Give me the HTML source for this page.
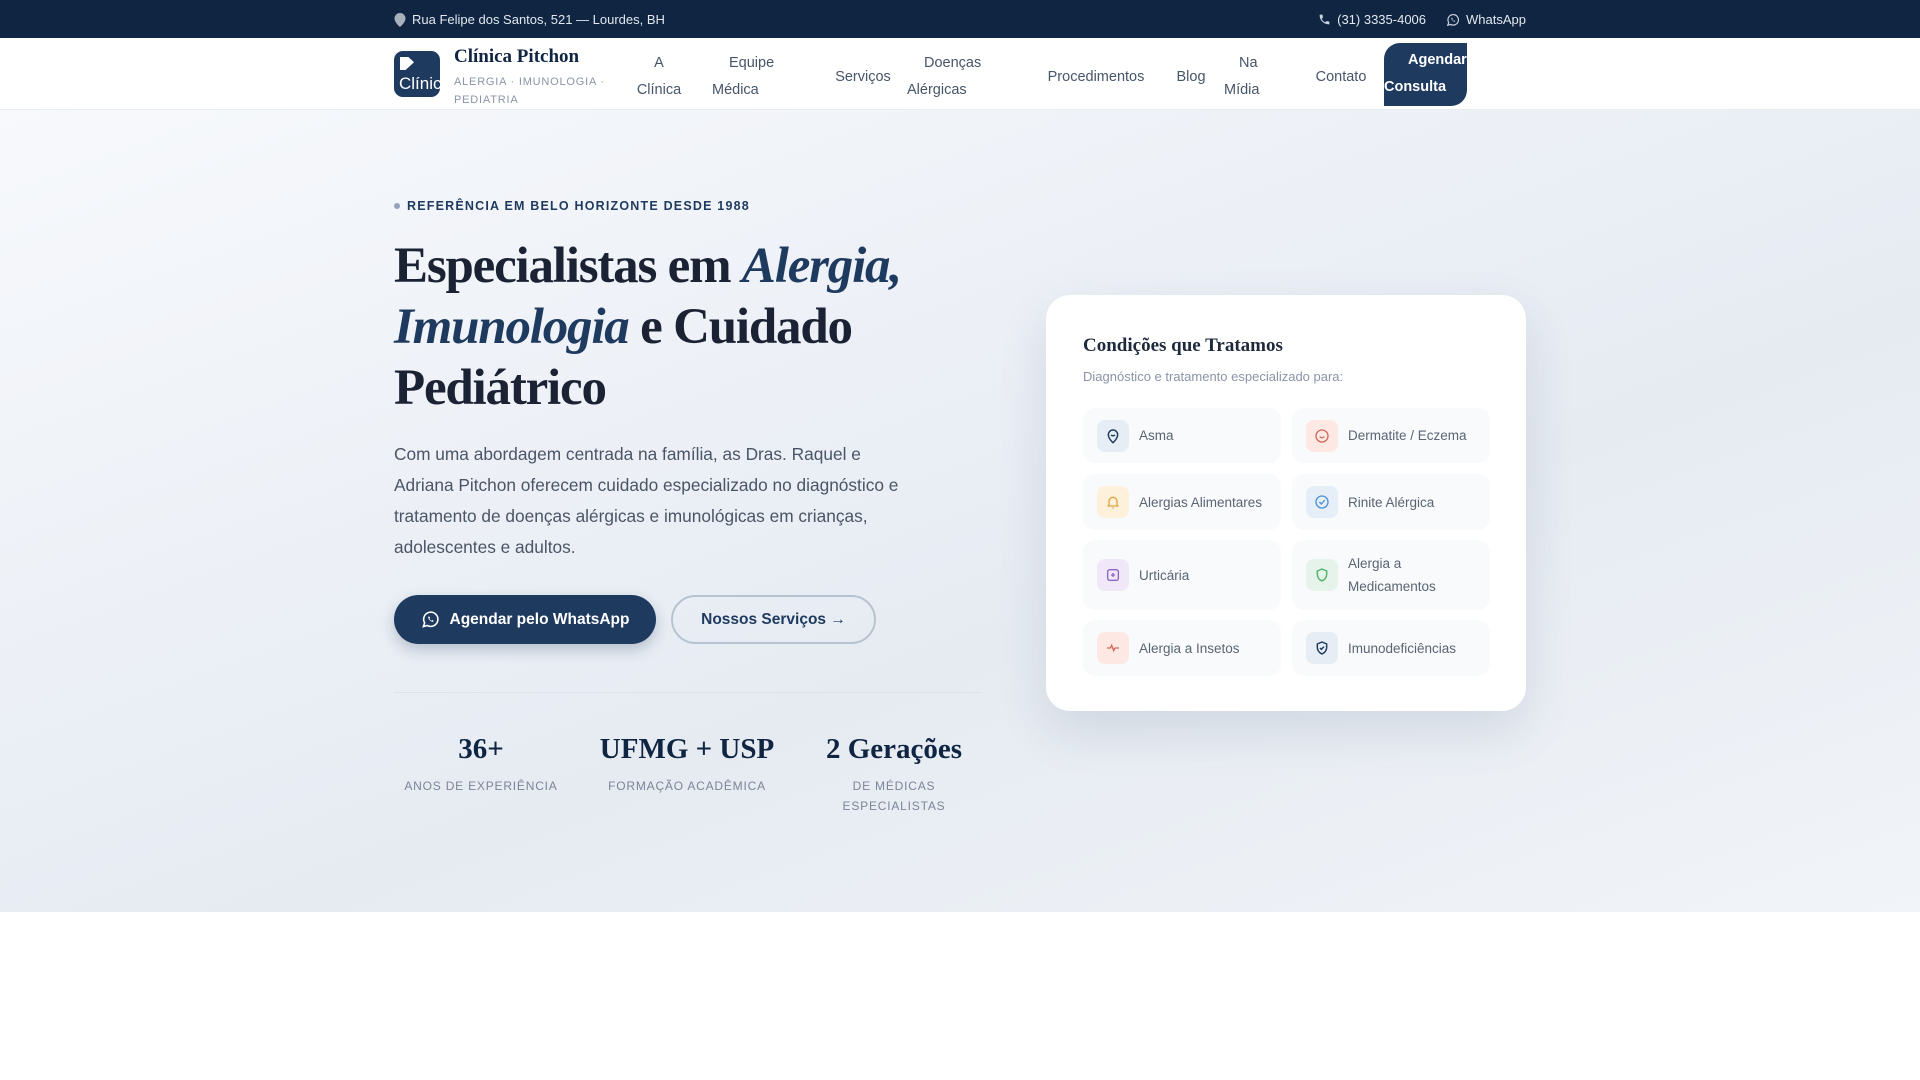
<!DOCTYPE html>
<html><head><meta charset="utf-8">
<style>
*{box-sizing:border-box;margin:0;padding:0}
body{width:1920px;height:1080px;overflow:hidden;background:#fff;font-family:"Liberation Sans",sans-serif;color:#1e293b}
.top{height:38px;background:#0f2542;color:#e2e8f0;font-size:13px;position:relative}
.top .l{position:absolute;left:394px;top:12px;display:flex;align-items:center;gap:6px}
.top .r{position:absolute;right:394px;top:12px;display:flex;align-items:center;gap:20px}
.top .r span{display:flex;align-items:center;gap:6px}
.nav{height:72px;background:#fff;border-bottom:1px solid #e8ecf1;position:relative}
.logo{position:absolute;left:394px;top:13px;width:46px;height:46px;border-radius:9px;background:#1e3a5f;overflow:hidden;color:#fff;font-size:17px}
.logo i{position:absolute;left:6px;top:6px;width:14px;height:13px;background:#fff;clip-path:polygon(0 0,60% 0,100% 40%,40% 100%,0 100%)}
.logo b{position:absolute;left:5px;top:23px;font-weight:normal;white-space:nowrap}
.brand{position:absolute;left:454px;top:8px}
.brand h1{font-family:"Liberation Serif",serif;font-size:19px;font-weight:bold;color:#0f2542}
.brand p{font-size:11px;letter-spacing:0.8px;color:#8a94a6;line-height:18px;margin-top:5px;width:165px}
.ni{position:absolute;font-size:14.5px;color:#475569;line-height:27px;text-align:center}
.cta{position:absolute;left:1384px;top:43px;width:83px;height:63px;background:#1e3a5f;color:#fff;font-weight:bold;font-size:14.5px;line-height:27px;padding-top:4px}
.hero{position:absolute;top:110px;left:0;width:1920px;height:802px;background:linear-gradient(160deg,#f7f9fc 0%,#eaeef5 45%,#e6ebf2 60%,#f1f4f8 100%)}
.eb{position:absolute;left:394px;top:199px;font-size:12.5px;font-weight:bold;letter-spacing:1.2px;color:#1e3a5f;display:flex;align-items:center;gap:7px}
.eb i{width:6px;height:6px;border-radius:50%;background:#94a3b8}
.h{position:absolute;left:394px;top:236px;font-family:"Liberation Serif",serif;font-weight:bold;font-size:51px;line-height:61px;color:#1a2233;letter-spacing:-1.2px;width:560px}
.h em{color:#1e3a5f}
.p{position:absolute;left:394px;top:439px;width:520px;font-size:17.3px;line-height:31px;color:#4b5565}
.b1{position:absolute;left:394px;top:595px;width:262px;height:49px;border-radius:25px;background:#1e3a5f;color:#fff;font-weight:bold;font-size:15.5px;display:flex;align-items:center;justify-content:center;gap:10px;box-shadow:0 6px 14px rgba(30,58,95,.25)}
.b2{position:absolute;left:671px;top:595px;width:205px;height:49px;border-radius:25px;border:2px solid #b8c3d2;color:#1e3a5f;font-weight:bold;font-size:15.5px;display:flex;align-items:center;justify-content:center}
.hr{position:absolute;left:394px;top:692px;width:586px;height:1px;background:#dbe1e9}
.st{position:absolute;top:730px;width:200px;text-align:center}
.st b{display:block;font-family:"Liberation Serif",serif;font-size:29px;color:#0f2542;line-height:38px}
.st span{display:block;font-size:12px;letter-spacing:0.8px;color:#7b8596;line-height:20px;margin-top:8px}
.card{position:absolute;left:1046px;top:295px;width:480px;height:416px;background:#fff;border-radius:24px;box-shadow:0 20px 50px rgba(30,58,95,.12)}
.card h2{position:absolute;left:37px;top:40px;font-family:"Liberation Serif",serif;font-size:19px;color:#1e293b}
.card .s{position:absolute;left:37px;top:74px;font-size:13px;color:#8a94a6}
.it{position:absolute;width:198px;background:#f8fafc;border-radius:12px;display:flex;align-items:center;font-size:13.5px;color:#5b6473;line-height:23px}
.ic{width:32px;height:32px;border-radius:8px;margin:0 10px 0 14px;flex:none;display:flex;align-items:center;justify-content:center}
</style></head><body>
<div class="top">
 <div class="l"><svg width="12" height="14" viewBox="0 0 12 14"><path d="M6 0a5.5 5.5 0 0 0-5.5 5.5C.5 9.5 6 14 6 14s5.5-4.5 5.5-8.5A5.5 5.5 0 0 0 6 0z" fill="#a7b0bd"/></svg>Rua Felipe dos Santos, 521 — Lourdes, BH</div>
 <div class="r"><span><svg width="13" height="13" viewBox="0 0 24 24"><path d="M6.6 10.8a15 15 0 0 0 6.6 6.6l2.2-2.2c.3-.3.7-.4 1-.2 1.1.4 2.3.6 3.6.6.6 0 1 .4 1 1V20c0 .6-.4 1-1 1A17 17 0 0 1 3 4c0-.6.4-1 1-1h3.5c.6 0 1 .4 1 1 0 1.3.2 2.5.6 3.6.1.3 0 .7-.2 1z" fill="#cbd5e1"/></svg>(31) 3335-4006</span><span><svg width="14" height="14" viewBox="0 0 24 24" fill="none" stroke="#cbd5e1" stroke-width="2"><path d="M3 21l1.6-4.7A9 9 0 1 1 8 19.6z"/><path d="M9 8.5c0 3 3 6 6 6.5l1-1.3-1.8-1-1 .8c-1-.5-2-1.5-2.5-2.5l.8-1-1-1.8z" fill="#cbd5e1" stroke="none"/></svg>WhatsApp</span></div>
</div>
<div class="nav">
 <div class="logo"><i></i><b>Clínic</b></div>
 <div class="brand"><h1>Clínica Pitchon</h1><p>ALERGIA · IMUNOLOGIA · PEDIATRIA</p></div>
 <div class="ni" style="left:630px;top:12px;width:58px">A<br>Clínica</div>
 <div class="ni" style="left:712px;top:12px;width:78px;text-align:left;padding-left:17px">Equipe<br><span style="margin-left:-17px">Médica</span></div>
 <div class="ni" style="left:833px;top:26px;width:60px">Serviços</div>
 <div class="ni" style="left:907px;top:12px;width:100px;text-align:left;padding-left:17px">Doenças<br><span style="margin-left:-17px">Alérgicas</span></div>
 <div class="ni" style="left:1046px;top:26px;width:100px">Procedimentos</div>
 <div class="ni" style="left:1173px;top:26px;width:36px">Blog</div>
 <div class="ni" style="left:1224px;top:12px;width:60px;text-align:left;padding-left:15px">Na<br><span style="margin-left:-15px">Mídia</span></div>
 <div class="ni" style="left:1311px;top:26px;width:60px">Contato</div>
</div>
<div class="cta" style="border-radius:16px 0 16px 0"><div style="padding-left:24px">Agendar</div><div>Consulta</div></div>
<div class="hero"></div>
<div class="eb"><i></i>REFERÊNCIA EM BELO HORIZONTE DESDE 1988</div>
<div class="h">Especialistas em <em>Alergia, Imunologia</em> e Cuidado Pediátrico</div>
<div class="p">Com uma abordagem centrada na família, as Dras. Raquel e Adriana Pitchon oferecem cuidado especializado no diagnóstico e tratamento de doenças alérgicas e imunológicas em crianças, adolescentes e adultos.</div>
<div class="b1"><svg width="19" height="19" viewBox="0 0 24 24" fill="none" stroke="#fff" stroke-width="2"><path d="M3 21l1.6-4.7A9 9 0 1 1 8 19.6z"/><path d="M9 8.5c0 3 3 6 6 6.5l1-1.3-1.8-1-1 .8c-1-.5-2-1.5-2.5-2.5l.8-1-1-1.8z" fill="#fff" stroke="none"/></svg>Agendar pelo WhatsApp</div>
<div class="b2">Nossos Serviços →</div>
<div class="hr"></div>
<div class="st" style="left:381px"><b>36+</b><span>ANOS DE EXPERIÊNCIA</span></div>
<div class="st" style="left:587px"><b>UFMG + USP</b><span>FORMAÇÃO ACADÊMICA</span></div>
<div class="st" style="left:794px"><b>2 Gerações</b><span>DE MÉDICAS<br>ESPECIALISTAS</span></div>
<div class="card">
 <h2>Condições que Tratamos</h2>
 <div class="s">Diagnóstico e tratamento especializado para:</div>
 <div class="it" style="left:37px;top:113px;height:55px"><div class="ic" style="background:#e6edf5"><svg width="16" height="16" viewBox="0 0 24 24" fill="none" stroke="#1e3a5f" stroke-width="2.2"><path d="M12 22s-7-6-7-12a7 7 0 0 1 14 0c0 6-7 12-7 12z"/><path d="M9 10.5c1.5 1.5 4.5 1.5 6 0"/></svg></div>Asma</div>
 <div class="it" style="left:246px;top:113px;height:55px"><div class="ic" style="background:#fde8e4"><svg width="16" height="16" viewBox="0 0 24 24" fill="none" stroke="#d0695a" stroke-width="2"><circle cx="12" cy="12" r="9"/><path d="M8.5 13c2 2 5 2 7 0"/></svg></div>Dermatite / Eczema</div>
 <div class="it" style="left:37px;top:179px;height:56px"><div class="ic" style="background:#fdf1dc"><svg width="16" height="16" viewBox="0 0 24 24" fill="none" stroke="#e0a53f" stroke-width="2"><path d="M6 17V11a6 6 0 0 1 12 0v6l2 1H4z"/><path d="M11 21h2"/></svg></div>Alergias Alimentares</div>
 <div class="it" style="left:246px;top:179px;height:56px"><div class="ic" style="background:#e6eef8"><svg width="16" height="16" viewBox="0 0 24 24" fill="none" stroke="#4a8fd9" stroke-width="2"><circle cx="12" cy="12" r="9"/><path d="M8 12l3 3 5-6"/></svg></div>Rinite Alérgica</div>
 <div class="it" style="left:37px;top:245px;height:70px"><div class="ic" style="background:#f0e8f8"><svg width="16" height="16" viewBox="0 0 24 24" fill="none" stroke="#8a64c9" stroke-width="2"><rect x="4" y="4" width="16" height="16" rx="3"/><path d="M12 9v6M9 12h6"/></svg></div>Urticária</div>
 <div class="it" style="left:246px;top:245px;height:70px"><div class="ic" style="background:#e5f3ea"><svg width="16" height="16" viewBox="0 0 24 24" fill="none" stroke="#4fb56a" stroke-width="2.2"><path d="M12 3l7 3v5c0 5-3 8-7 10-4-2-7-5-7-10V6z"/></svg></div>Alergia a<br>Medicamentos</div>
 <div class="it" style="left:37px;top:325px;height:56px"><div class="ic" style="background:#fde8e4"><svg width="16" height="16" viewBox="0 0 24 24" fill="none" stroke="#d0695a" stroke-width="2"><path d="M3 12h5l2-4 3 8 2-4h6"/></svg></div>Alergia a Insetos</div>
 <div class="it" style="left:246px;top:325px;height:56px"><div class="ic" style="background:#e6edf5"><svg width="16" height="16" viewBox="0 0 24 24" fill="none" stroke="#1e3a5f" stroke-width="2.2"><path d="M12 3l7 3v5c0 5-3 8-7 10-4-2-7-5-7-10V6z"/><path d="M9 12l2 2 4-4"/></svg></div>Imunodeficiências</div>
</div>
</body></html>
